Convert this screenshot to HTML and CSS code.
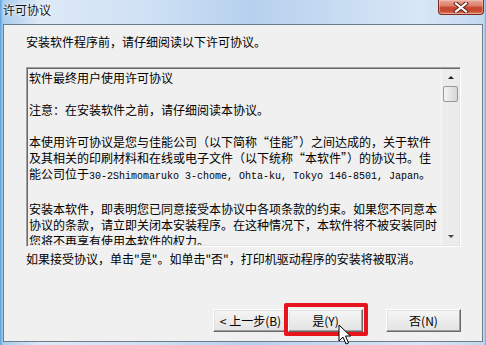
FILE: index.html
```html
<!DOCTYPE html>
<html>

<head>
  <title>许可协议</title>
  <link rel="stylesheet" href="styles.css">
</head>

<body>
  <div class="window">
    <div class="titlebar">
      <span class="title">许可协议</span>
      <div class="close-btn">
        <svg width="16" height="11" viewBox="0 0 16 11">
          <path d="M3 1.5 L13 9.5 M13 1.5 L3 9.5" stroke="#5a1a10" stroke-width="4" stroke-linecap="square" />
          <path d="M3 1.5 L13 9.5 M13 1.5 L3 9.5" stroke="#ffffff" stroke-width="2.2" stroke-linecap="square" />
        </svg>
      </div>
    </div>

    <div class="client">
      <p class="intro">安装软件程序前，请仔细阅读以下许可协议。</p>

      <div class="license-box">
        <div class="license-text">
          <p>软件最终用户使用许可协议</p>
          <p>注意：在安装软件之前，请仔细阅读本协议。</p>
          <p>本使用许可协议是您与佳能公司（以下简称“佳能”）之间达成的，关于软件<br>及其相关的印刷材料和在线或电子文件（以下统称“本软件”）的协议书。佳<br>能公司位于<span class="latin">30-2Shimomaruko 3-chome, Ohta-ku, Tokyo 146-8501, Japan</span>。</p>
          <p>安装本软件，即表明您已同意接受本协议中各项条款的约束。如果您不同意本<br>协议的条款，请立即关闭本安装程序。在这种情况下，本软件将不被安装同时<br>您将不再享有使用本软件的权力。</p>
        </div>
        <div class="scrollbar">
          <div class="arrow-up"></div>
          <div class="thumb"></div>
          <div class="track"></div>
          <div class="arrow-down"></div>
        </div>
      </div>

      <p class="accept">如果接受协议，单击"是"。如单击"否"，打印机驱动程序的安装将被取消。</p>

      <div class="buttons">
        <button type="button" class="btn">&lt; 上一步(B)</button>
        <button type="button" class="btn btn-yes">是(Y)</button>
        <button type="button" class="btn btn-no">否(N)</button>
      </div>
    </div>

    <svg class="cursor" width="14" height="22" viewBox="0 0 14 22">
      <path d="M1 1 L1 17 L5 13 L8 20 L10.5 19 L7.5 12 L12.5 12 Z" fill="#ffffff" stroke="#000000" stroke-width="1" stroke-linejoin="miter" />
    </svg>
  </div>
</body>

</html>
```

FILE: styles.css
```css
html,
body {
  margin: 0;
  padding: 0;
}

body {
  font-family: "Noto Sans CJK SC", sans-serif;
  font-size: 12px;
  color: #000;
}

.window {
  position: relative;
  width: 486px;
  height: 345px;
  overflow: hidden;
  padding: 0 3px 3px 3px;
  box-sizing: border-box;
  background: linear-gradient(90deg, #5aa2dc 0px, #a9cdee 3px, #dde9f6 40px, #cfe1f4 150px, #b6d0ee 250px, #c8dcf2 340px, #d9e7f6 420px, #c2d8ef 484px, #6aa8dc 486px);
}

.titlebar {
  height: 24px;
  display: flex;
  justify-content: space-between;
  align-items: flex-start;
}

.title {
  padding-top: 2px;
  line-height: 16px;
  font-size: 12px;
  color: #111;
  text-shadow: 0 0 4px #ffffff, 0 0 2px #ffffff;
}

.close-btn {
  width: 44px;
  height: 14px;
  margin-right: -1px;
  border: 1px solid #7d2c20;
  border-top: none;
  border-radius: 0 0 4px 4px;
  background: linear-gradient(180deg, #e9a79c 0%, #dd7f6c 40%, #c8462f 55%, #c94a33 80%, #e08a6e 100%);
  display: flex;
  justify-content: center;
  align-items: center;
  box-shadow: inset 0 0 0 1px rgba(255, 220, 210, 0.4);
}

.client {
  height: 318px;
  box-sizing: border-box;
  border: 1px solid #6d7c8b;
  background-color: #f0f0f0;
  padding: 0 21px 0 22px;
  display: flex;
  flex-direction: column;
}

.intro {
  margin: 9px 0 0 0;
  line-height: 16px;
}

.license-box {
  margin-top: 17px;
  height: 180px;
  box-sizing: border-box;
  display: flex;
  border-top: 1px solid #a0a0a0;
  border-left: 1px solid #a0a0a0;
  border-right: 1px solid #ffffff;
  border-bottom: 1px solid #ffffff;
  box-shadow: inset 1px 1px 0 #696969, inset -1px -1px 0 #e3e3e3;
  padding: 1px;
}

.license-text {
  flex: 1;
  overflow: hidden;
  padding: 1px 0 0 1px;
  line-height: 16px;
  white-space: nowrap;
}

.license-text p {
  margin: 0 0 16px 0;
}

.latin {
  font-family: "Liberation Mono", monospace;
  font-size: 10px;
}

.scrollbar {
  width: 17px;
  display: flex;
  flex-direction: column;
  align-items: center;
  background-color: #ececec;
  border-left: 1px solid #f8f8f8;
}

.arrow-up,
.arrow-down {
  height: 17px;
  width: 17px;
  display: flex;
  justify-content: center;
  align-items: center;
}

.arrow-up::after {
  content: "";
  border-left: 3px solid transparent;
  border-right: 3px solid transparent;
  border-bottom: 3px solid #222;
}

.arrow-down::after {
  content: "";
  border-left: 3px solid transparent;
  border-right: 3px solid transparent;
  border-top: 3px solid #444;
}

.thumb {
  width: 13px;
  height: 14px;
  border: 1px solid #979797;
  border-radius: 2px;
  background: linear-gradient(90deg, #f4f4f4 0%, #e6e6e6 50%, #d6d6d6 100%);
}

.track {
  flex: 1;
}

.accept {
  margin: 4px 0 0 0;
  line-height: 16px;
}

.buttons {
  margin-top: 42px;
  display: flex;
  justify-content: flex-end;
}

.btn {
  width: 75px;
  height: 23px;
  padding: 0;
  font-family: "Noto Sans CJK SC", sans-serif;
  font-size: 12px;
  color: #000;
  background: linear-gradient(180deg, #f6f6f6 0%, #ececec 50%, #e2e2e2 100%);
  border-top: 1px solid #ffffff;
  border-left: 1px solid #ffffff;
  border-right: 1px solid #696969;
  border-bottom: 1px solid #696969;
  box-shadow: inset -1px -1px 0 #a0a0a0, inset 1px 1px 0 #e3e3e3;
}

.btn-yes {
  position: relative;
}

.btn-yes::after {
  content: "";
  position: absolute;
  left: -5px;
  top: -7px;
  right: -6px;
  bottom: -5px;
  border: 4px solid #e8141c;
  border-radius: 2px;
}

.btn-no {
  margin-left: 23px;
}

.cursor {
  position: absolute;
  left: 338px;
  top: 324px;
}
```
